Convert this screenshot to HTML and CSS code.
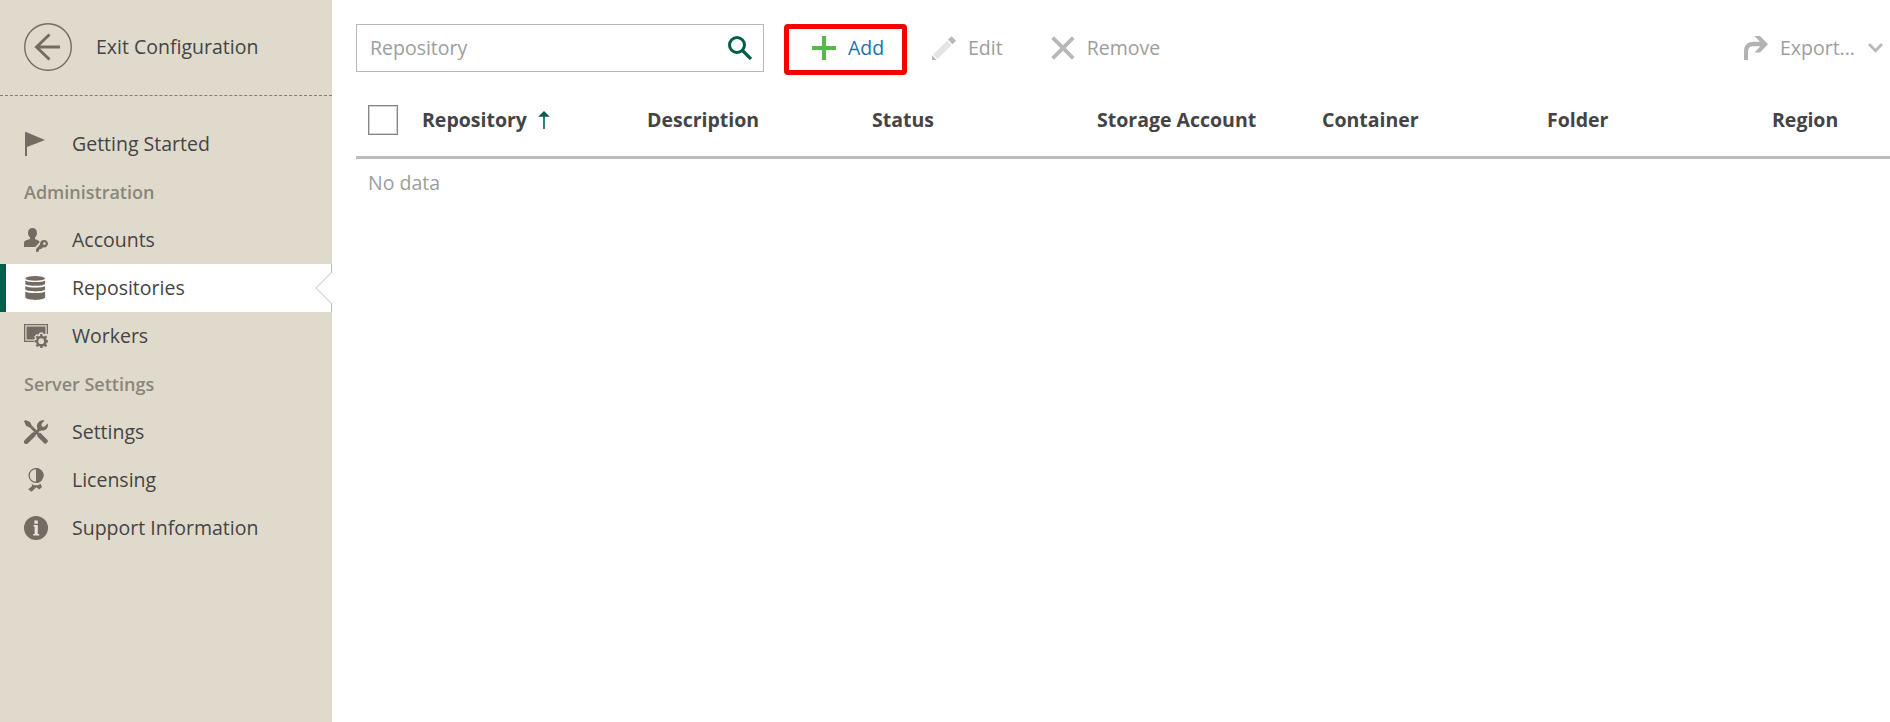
FILE: index.html
```html
<!DOCTYPE html>
<html lang="en">
<head>
<meta charset="utf-8">
<title>Repositories</title>
<link rel="stylesheet" href="styles.css">
</head>
<body>
<div class="app">
  <aside class="sidebar">
    <a class="exit">
      <svg class="exit-icon" width="48" height="48" viewBox="0 0 48 48" fill="none" stroke="#746c63"><circle cx="24" cy="24" r="23.3" stroke-width="1.4"/><path d="M36 24H12.500M25.500 11.500L12.500 24L25.500 36.500" stroke-width="2.900"/></svg>
      <span>Exit Configuration</span>
    </a>
    <nav class="nav">
      <a class="item"><svg class="icon" viewBox="0 0 24 24"><path d="M1 0h1l19 8L3 15v9H1z"/></svg><span>Getting Started</span></a>
      <h2 class="group">Administration</h2>
      <a class="item"><svg class="icon" viewBox="0 0 24 24"><path d="M8.500 0c2.700 0 4.500 1.900 4.500 4.700 0 1.800-.7 3.700-2 4.800v1.500l3.300 1.400c.8.400 1.200 1.200 1.200 2.200l-4.300 4.400H0v-3.500c0-2 .8-2.800 2.200-3.300L6 11V9.500C4.700 8.400 4 6.500 4 4.700 4 1.900 5.800 0 8.500 0z"/><path fill-rule="evenodd" d="M20 12c2.400 0 4 1.500 4 3.600 0 2.300-1.700 4-4 4h-1.500l-1.200 1.300h-1.500l-1 1.300v1.600H12v-2.600l4-4.600c-.2-2.700 1.500-4.600 4-4.600zm.4 2.200a1.400 1.400 0 1 0 0 2.800 1.400 1.400 0 0 0 0-2.800z"/></svg><span>Accounts</span></a>
      <a class="item active"><svg class="icon" viewBox="0 0 24 24"><ellipse cx="11.200" cy="2.400" rx="9.800" ry="2.400"/><path d="M1.300 4.400c3 2 16.800 2 19.800 0v3.500c-2.500 2.500-17.300 2.500-19.800 0zM1.300 10c3 2 16.800 2 19.800 0v3.500c-2.500 2.500-17.300 2.500-19.800 0zM1.300 15.600c3 2 16.800 2 19.800 0v6c-2.500 3.200-17.300 3.200-19.800 0z"/></svg><span>Repositories</span>
        <svg class="notch" width="17" height="48" viewBox="0 0 17 48" fill="none"><path d="M16.500 0V9M16.500 39V48" stroke="#b9b9b9"/><path d="M16.500 8.500L1 24L16.500 39.500" stroke="#d8d8d8" stroke-width="1.200"/></svg></a>
      <a class="item"><svg class="icon" viewBox="0 0 24 24"><path d="M0 0h24v10h-1.300V1.300H1.300v15.400H10V18H0z"/><path d="M2.500 2.500h19v7l-1.500.8-1.300-1.800h-3l-1.200 2-2.200-.3-2 2.300.6 2-1 1H2.500z"/><path fill-rule="evenodd" d="M16.200 10h2l.5 1.900 1.300.6 1.800-1 1.300 1.400-1 1.700.6 1.300 1.600.4v1.900l-1.700.5-.5 1.300 1 1.700-1.400 1.400-1.700-1-1.200.5-.5 1.700h-1.800l-.5-1.700-1.200-.5-1.700 1-1.400-1.400 1-1.700-.5-1.300-1.700-.5v-1.900l1.700-.4.500-1.300-1-1.700 1.400-1.400 1.700 1 1.200-.6zm1 4.300a2.900 2.900 0 1 0 0 5.800 2.900 2.900 0 0 0 0-5.800z"/></svg><span>Workers</span></a>
      <h2 class="group">Server Settings</h2>
      <a class="item"><svg class="icon" viewBox="0 0 24 24"><path d="M2.200 21.800L9.500 14.600" stroke="#746c63" stroke-width="4.600" stroke-linecap="round"/><path d="M10.500 14L16 8.500" stroke="#746c63" stroke-width="2.500"/><path d="M0 1.200L1.500 0 6 2 7.800 5.500l7.200 7.200 1.600.2 6.900 7c1.500 1.800-1.600 4.900-3.400 3.400l-6.700-6.700-.2-1.700L5.800 7.500 2.200 6z"/><path d="M20.500.4l-3 3.600.3 2.400 2.500.3 3.500-3.200c.8 4-1.800 7-5.200 7-1.300 0-2.300.1-3.200 1l-2.300-2.500c.6-.8-.3-2-.2-3.200C13.200 2 17-.7 20.500.4z"/></svg><span>Settings</span></a>
      <a class="item"><svg class="icon" viewBox="0 0 24 24"><circle cx="12" cy="7.500" r="6.900" fill="none" stroke="#746c63" stroke-width="1.300"/><path d="M12 0a7.500 7.500 0 0 1 0 15z"/><path d="M7.500 15.800l2.500 1.400h4l2.500-1.400L18 19l-2.700 2.600-3-2.400-4.800 4.500-3.300-2.500L8.200 18z"/></svg><span>Licensing</span></a>
      <a class="item"><svg class="icon" viewBox="0 0 24 24"><circle cx="12" cy="12" r="12"/><path d="M10.400 4.500h3.400v3.200h-3.400zM9.500 9h4.300v9h1.400v1.400H9.300V18h1.300v-7.600H9.500z" fill="#e8e3d7"/></svg><span>Support Information</span></a>
    </nav>
  </aside>
  <main class="main">
    <div class="toolbar">
      <div class="search">
        <span>Repository</span>
        <svg width="24" height="24" viewBox="0 0 24 24" fill="none" stroke="#005f4b"><circle cx="9" cy="9" r="7.500" stroke-width="3"/><path d="M14.500 14.500L23 23" stroke-width="3.200"/></svg>
      </div>
      <button class="action add"><svg width="24" height="24" viewBox="0 0 24 24"><path d="M10 0h4v10h10v4H14v10h-4V14H0v-4h10z" fill="#54b948"/></svg><span>Add</span></button>
      <button class="action edit"><svg width="24" height="24" viewBox="0 0 24 24"><path d="M1.200 18.500L15 4.700l4.500 4.500L5.500 22.900z" fill="#e4e4e4"/><path d="M16 3.700L19.500.2 24 4.700l-3.500 3.500zM0 24v-4.700L4.700 24z" fill="#b8b8b8"/></svg><span>Edit</span></button>
      <button class="action"><svg width="24" height="24" viewBox="0 0 24 24"><path d="M1.700 1.700L22.300 22.300M22.300 1.700L1.700 22.300" stroke="#b8b8b8" stroke-width="3.800"/></svg><span>Remove</span></button>
      <button class="action export"><svg width="24" height="24" viewBox="0 0 24 24" fill="#b3b3b3"><path d="M10.500 0H16l8 8.200-8 8.300h-5.500l6-6.300H10c-4 0-6 1.800-6 5.300V24H0v-8.500C0 9 3.500 5.700 10 5.700h6z"/></svg><span>Export...</span><svg class="chevron" width="15" height="10" viewBox="0 0 15 10" fill="none"><path d="M1 1L7.500 7.800L14 1" stroke="#b8b8b8" stroke-width="2.800"/></svg></button>
    </div>
    <div class="table-head">
      <div class="check"></div>
      <div class="col">Repository<svg class="sort" width="12" height="18" viewBox="0 0 12 18"><path d="M6 0l5.800 5.800H6.800V18H5.200V5.800H.2z" fill="#005f4b"/></svg></div>
      <div class="col">Description</div>
      <div class="col">Status</div>
      <div class="col">Storage Account</div>
      <div class="col">Container</div>
      <div class="col">Folder</div>
      <div class="col">Region</div>
    </div>
    <div class="empty">No data</div>
  </main>
</div>
</body>
</html>
```
FILE: styles.css
```css
* { box-sizing: border-box; }
body {
  margin: 0;
  font: 19.5px/24px "Open Sans", sans-serif;
  color: #444;
  background: #fff;
  overflow: hidden;
}
.app { display: flex; height: 722px; }
.sidebar { width: 332px; flex: none; background: #e0dacc; }
.exit {
  display: flex;
  align-items: center;
  gap: 24px;
  height: 96px;
  padding: 0 24px 1px;
  border-bottom: 1px dashed #857f72;
}
.nav { padding-top: 24px; }
.item {
  position: relative;
  display: flex;
  align-items: center;
  gap: 24px;
  height: 48px;
  padding-left: 24px;
}
.icon { width: 24px; height: 24px; flex: none; fill: #746c63; }
.active {
  padding-left: 18px;
  border-left: 6px solid #005f4b;
  background: #fff;
}
.notch { position: absolute; right: 0; top: 0; }
.group {
  height: 48px;
  margin: 0;
  padding-left: 24px;
  font-size: 18px;
  line-height: 48px;
  font-weight: 600;
  color: #89867a;
}
.main { flex: 1; min-width: 0; padding: 24px 0 0 24px; }
.toolbar { display: flex; height: 48px; }
.search {
  display: flex;
  align-items: center;
  justify-content: space-between;
  width: 408px;
  height: 48px;
  padding: 0 11px 0 13px;
  border: 1px solid #b8b8b8;
  color: #9d9d9d;
}
.action {
  display: flex;
  align-items: center;
  gap: 12px;
  height: 48px;
  margin: 0 0 0 48px;
  padding: 0;
  border: 0;
  background: none;
  font: inherit;
  color: #9d9d9d;
}
.add {
  width: 123px;
  height: 51px;
  margin-left: 20px;
  padding: 0 0 3px 23px;
  border: 5px solid #f90000;
  border-radius: 4px;
  color: #1d72a3;
}
.edit { margin-left: 25px; }
.export { margin-left: auto; padding-right: 7px; }
.chevron { margin-left: 1px; }
.table-head {
  display: flex;
  align-items: center;
  height: 87px;
  padding: 12px 0 0 12px;
  border-bottom: 3px solid #bdbdbd;
  overflow: hidden;
}
.check {
  width: 30px;
  height: 30px;
  flex: none;
  margin-right: 24px;
  border: 1px solid #868686;
  box-shadow: inset 0 0 0 1px #d0d0d0;
}
.col {
  display: flex;
  align-items: center;
  width: 225px;
  flex: none;
  font-weight: 700;
}
.sort { margin-left: 11px; }
.empty { padding: 12px; color: #9d9d9d; }
```
